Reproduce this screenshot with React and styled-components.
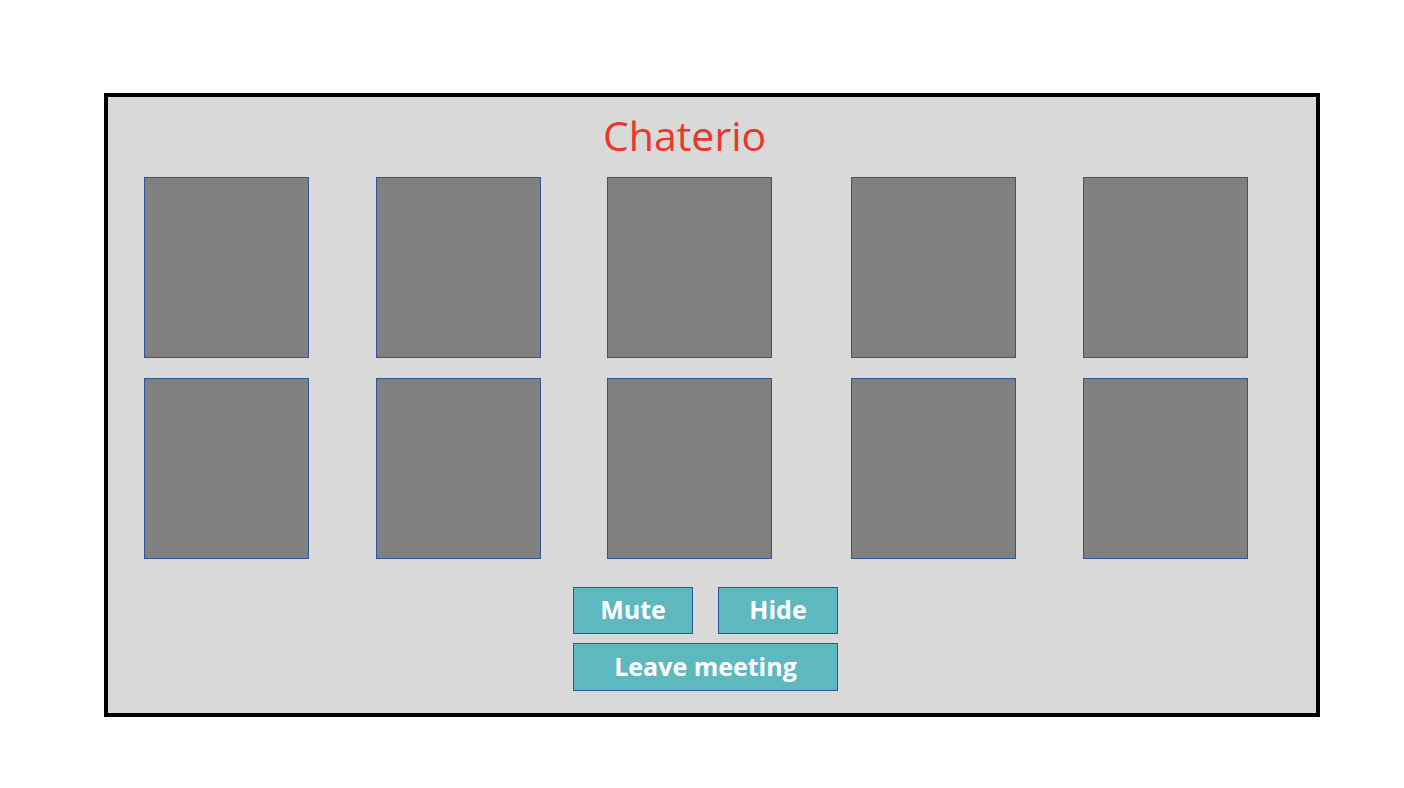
import React from "react";
import styled, { createGlobalStyle } from "styled-components";

const GlobalStyle = createGlobalStyle`
  body {
    margin: 0;
    background: #ffffff;
    font-family: "Open Sans", "Liberation Sans", sans-serif;
  }
`;

const tiles = [
  [{ id: 1 }, { id: 2 }, { id: 3 }, { id: 4, shift: true }, { id: 5 }],
  [{ id: 6 }, { id: 7 }, { id: 8 }, { id: 9, shift: true }, { id: 10 }],
];

function Tile({ shift }) {
  return <Box $shift={shift} />;
}

function Controls() {
  return (
    <ButtonGrid>
      <ActionBtn>Mute</ActionBtn>
      <ActionBtn>Hide</ActionBtn>
      <ActionBtn $wide>Leave meeting</ActionBtn>
    </ButtonGrid>
  );
}

const App = () => {
  return (
    <>
      <GlobalStyle />
      <Frame>
        <Title>Chaterio</Title>
        <Grid>
          {tiles.map((row, i) => (
            <Row key={i}>
              {row.map((t) => (
                <Tile key={t.id} shift={t.shift} />
              ))}
            </Row>
          ))}
        </Grid>
        <Controls />
      </Frame>
    </>
  );
};

export default App;

const Frame = styled.div`
  box-sizing: border-box;
  width: 1216px;
  height: 624px;
  margin: 93px 0 0 104px;
  border: 4px solid #000000;
  background-color: #d9d9d9;
  padding: 14px 0 0 36px;
  display: flex;
  flex-direction: column;
`;

const Title = styled.h1`
  margin: 0 0 18px 459px;
  font-family: "Open Sans", "Liberation Sans", sans-serif;
  font-weight: 400;
  font-size: 41px;
  line-height: 48px;
  letter-spacing: 0;
  color: #e9372b;
`;

const Grid = styled.div`
  display: flex;
  flex-direction: column;
  gap: 20px;
`;

const Row = styled.div`
  display: flex;
  gap: 66.5px;
`;

const Box = styled.div`
  box-sizing: border-box;
  width: 165px;
  height: 181px;
  background-color: #808080;
  border: 1px solid #2f5597;
  margin-left: ${(p) => (p.$shift ? "12.5px" : "0")};
`;

const ButtonGrid = styled.div`
  display: grid;
  grid-template-columns: 120px 120px;
  column-gap: 25px;
  row-gap: 9px;
  margin: 28px 0 0 429px;
  width: 265px;
`;

const ActionBtn = styled.button`
  box-sizing: border-box;
  grid-column: ${(p) => (p.$wide ? "1 / span 2" : "auto")};
  height: ${(p) => (p.$wide ? "48px" : "47px")};
  padding: 0 0 3px;
  border: 1px solid #2f5597;
  background-color: #5db9be;
  color: #ffffff;
  font-family: "Open Sans", "Liberation Sans", sans-serif;
  font-weight: 700;
  font-size: 25px;
  display: flex;
  align-items: center;
  justify-content: center;
  cursor: pointer;
`;
